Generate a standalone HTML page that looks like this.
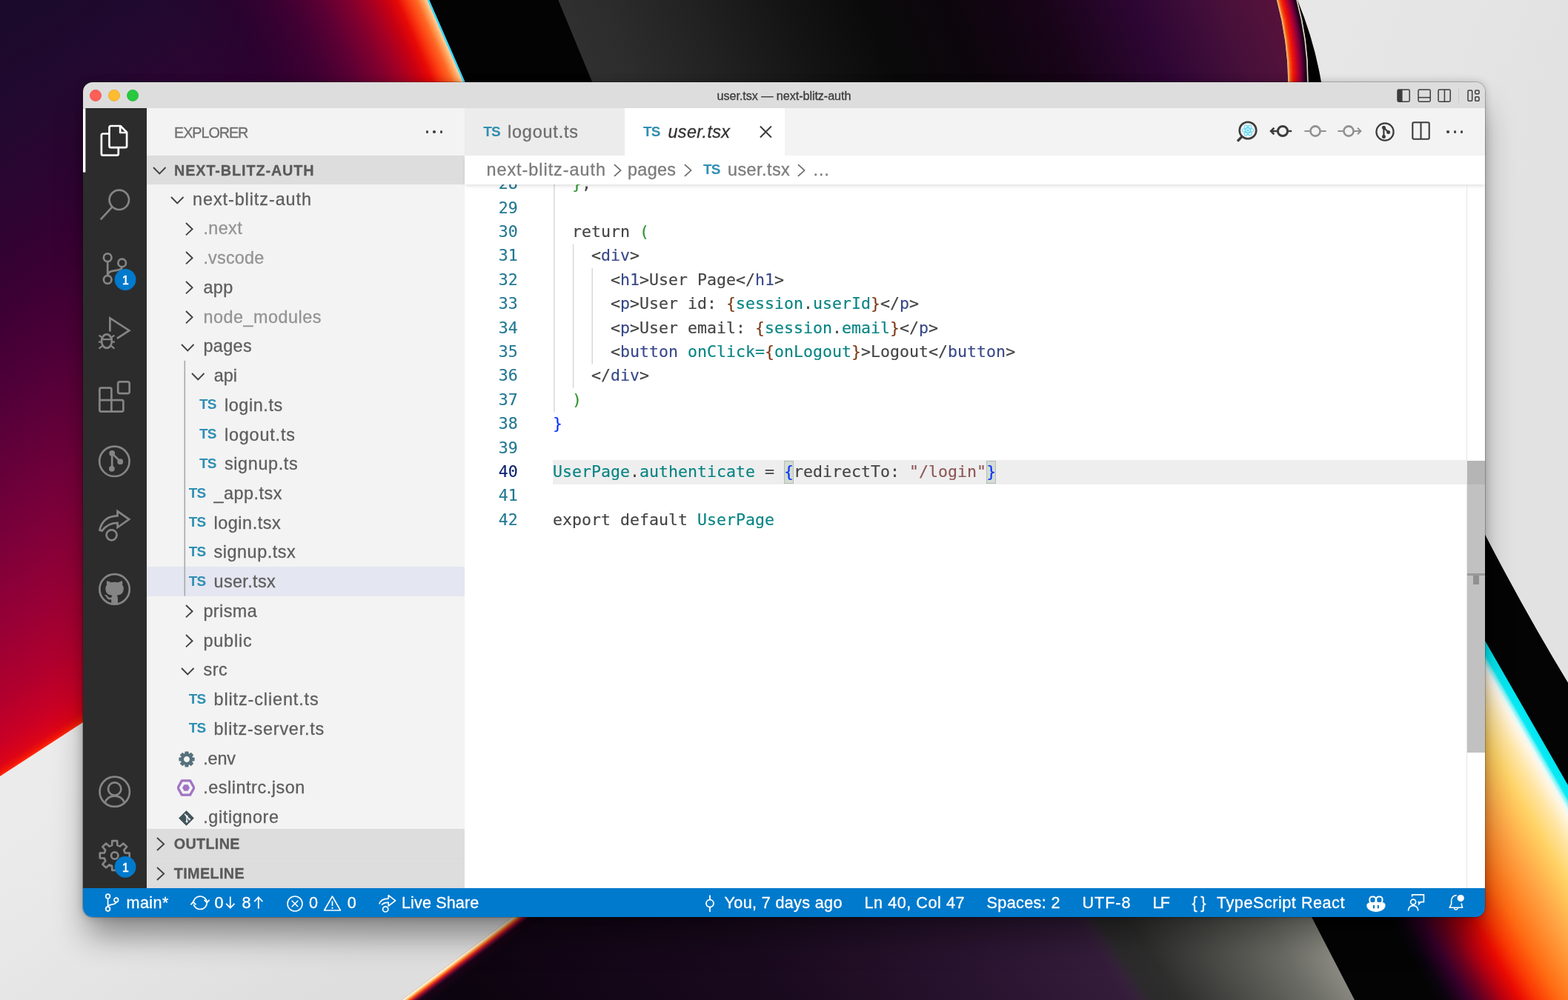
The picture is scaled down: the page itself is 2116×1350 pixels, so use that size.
<!DOCTYPE html>
<html lang="en"><head><meta charset="utf-8"><title>user.tsx — next-blitz-auth</title>
<style>
html,body{margin:0;padding:0;}
body{width:2116px;height:1350px;overflow:hidden;position:relative;background:#0a0a0a;font-family:"Liberation Sans",sans-serif;}
.t{position:absolute;white-space:pre;line-height:1;-webkit-text-stroke:0.3px currentColor;}
.r{position:absolute;display:block;}
.m{font-family:"DejaVu Sans Mono","Liberation Mono",monospace;-webkit-text-stroke:0.15px currentColor;}
#wall{position:absolute;left:0;top:0;}
#shadow{position:absolute;left:112px;top:111px;width:1892px;height:1127px;border-radius:13px;box-shadow:0 0 0 1px rgba(0,0,0,0.2),0 0 12px rgba(0,0,0,0.2),0 30px 44px -6px rgba(0,0,0,0.42);}
#win{position:absolute;left:0;top:0;width:2116px;height:1350px;clip-path:inset(111px 112px 112px 112px round 13px);will-change:transform;}
</style></head><body>
<svg id="wall" width="2116" height="1350" viewBox="0 0 2116 1350"><defs><linearGradient id="gA" gradientUnits="userSpaceOnUse" x1="0.0" y1="1048.0" x2="-490.5" y2="293.8"><stop offset="0.0000" stop-color="#ff2a10"/><stop offset="0.0044" stop-color="#f01408"/><stop offset="0.0133" stop-color="#dc0418"/><stop offset="0.0444" stop-color="#c80026"/><stop offset="0.1000" stop-color="#b0002e"/><stop offset="0.1889" stop-color="#960036"/><stop offset="0.2889" stop-color="#7c003a"/><stop offset="0.3889" stop-color="#64003a"/><stop offset="0.4889" stop-color="#4e0038"/><stop offset="0.5889" stop-color="#3c0034"/><stop offset="0.6889" stop-color="#2e0432"/><stop offset="0.8000" stop-color="#240830"/><stop offset="0.9111" stop-color="#1d0a2d"/><stop offset="1.0000" stop-color="#1a0b2b"/></linearGradient><linearGradient id="gB" gradientUnits="userSpaceOnUse" x1="579.6" y1="0.0" x2="277.1" y2="131.9"><stop offset="0.0000" stop-color="#38d8ff"/><stop offset="0.0067" stop-color="#38d8ff"/><stop offset="0.0097" stop-color="#ffd2a0"/><stop offset="0.0242" stop-color="#ffa860"/><stop offset="0.0485" stop-color="#ff6a26"/><stop offset="0.0848" stop-color="#fb3a10"/><stop offset="0.1212" stop-color="#e80a06"/><stop offset="0.1667" stop-color="#c80012"/><stop offset="0.2273" stop-color="#a40024"/><stop offset="0.3030" stop-color="#80002e"/><stop offset="0.4091" stop-color="#5c0034"/><stop offset="0.5455" stop-color="#400032" stop-opacity="0.9"/><stop offset="0.7273" stop-color="#2c002e" stop-opacity="0.6"/><stop offset="1.0000" stop-color="#20042a" stop-opacity="0"/></linearGradient><linearGradient id="gC" gradientUnits="userSpaceOnUse" x1="0.0" y1="1000.0" x2="286.0" y2="1431.6"><stop offset="0.0000" stop-color="#ececec"/><stop offset="0.3846" stop-color="#e9e9e9"/><stop offset="1.0000" stop-color="#dedede"/></linearGradient><linearGradient id="gD" gradientUnits="userSpaceOnUse" x1="542.0" y1="1350.0" x2="560.0" y2="1374.0"><stop offset="0.0000" stop-color="#fff8ee"/><stop offset="0.0800" stop-color="#ffe8b8"/><stop offset="0.1467" stop-color="#ffa040"/><stop offset="0.2200" stop-color="#f4461a"/><stop offset="0.3000" stop-color="#b01428"/><stop offset="0.3833" stop-color="#58082e"/><stop offset="0.4833" stop-color="#1a0416"/><stop offset="1.0000" stop-color="#0c040e"/></linearGradient><linearGradient id="gE" gradientUnits="userSpaceOnUse" x1="600.0" y1="1290.0" x2="1471.5" y2="712.5"><stop offset="0.0000" stop-color="#0c040e"/><stop offset="0.1143" stop-color="#120616"/><stop offset="0.3333" stop-color="#1a0a1e"/><stop offset="0.5714" stop-color="#2a1430"/><stop offset="0.7619" stop-color="#38203e"/><stop offset="0.8571" stop-color="#3e2542"/><stop offset="1.0000" stop-color="#3e2542"/></linearGradient><linearGradient id="gF" gradientUnits="userSpaceOnUse" x1="1448.0" y1="1238.0" x2="1697.0" y2="1073.0"><stop offset="0.0000" stop-color="#3a2440" stop-opacity="0"/><stop offset="0.0833" stop-color="#2c2a2c" stop-opacity="1"/><stop offset="0.2000" stop-color="#2e2e2d"/><stop offset="0.4667" stop-color="#4e4e4a"/><stop offset="0.7000" stop-color="#6c6c66"/><stop offset="0.8833" stop-color="#8c8c84"/><stop offset="1.0000" stop-color="#9a9a92"/></linearGradient><linearGradient id="gG" gradientUnits="userSpaceOnUse" x1="2004.0" y1="865.0" x2="1743.9" y2="1014.4"><stop offset="0.0000" stop-color="#00e6f2"/><stop offset="0.0300" stop-color="#08eaf4"/><stop offset="0.0400" stop-color="#7af2f6"/><stop offset="0.0567" stop-color="#e8fbf8"/><stop offset="0.0733" stop-color="#fff6e4"/><stop offset="0.1333" stop-color="#ffe6a6"/><stop offset="0.2167" stop-color="#ffd468"/><stop offset="0.2833" stop-color="#ffbe54"/><stop offset="0.3500" stop-color="#ffa646"/><stop offset="0.4333" stop-color="#ff8a2c"/><stop offset="0.5167" stop-color="#ff6a12"/><stop offset="0.6000" stop-color="#fb3a04"/><stop offset="0.6667" stop-color="#ea0a02"/><stop offset="0.7333" stop-color="#b80010"/><stop offset="0.8000" stop-color="#72001e"/><stop offset="0.8733" stop-color="#36002a"/><stop offset="0.9500" stop-color="#0c0410"/><stop offset="1.0000" stop-color="#040404"/></linearGradient><linearGradient id="gH" gradientUnits="userSpaceOnUse" x1="753.0" y1="0.0" x2="1677.0" y2="-383.0"><stop offset="0.0000" stop-color="#303030"/><stop offset="0.0600" stop-color="#2c2c2c"/><stop offset="0.1600" stop-color="#222222"/><stop offset="0.2800" stop-color="#141414"/><stop offset="0.3800" stop-color="#0a0a0a"/><stop offset="0.4800" stop-color="#0c060c"/><stop offset="0.6000" stop-color="#180418"/><stop offset="0.7200" stop-color="#2e0634"/><stop offset="0.8200" stop-color="#46103a"/><stop offset="0.9000" stop-color="#58123a"/><stop offset="0.9600" stop-color="#62143a"/><stop offset="1.0000" stop-color="#66163a"/></linearGradient><linearGradient id="gI" gradientUnits="userSpaceOnUse" x1="1722.0" y1="0.0" x2="1751.7" y2="-4.2"><stop offset="0.0000" stop-color="#ffe9b0"/><stop offset="0.0667" stop-color="#ffb050"/><stop offset="0.1667" stop-color="#ff4a0c"/><stop offset="0.3333" stop-color="#f01408"/><stop offset="0.5000" stop-color="#c40430"/><stop offset="0.6667" stop-color="#7a0040"/><stop offset="0.8000" stop-color="#3a0030"/><stop offset="0.9000" stop-color="#140010"/><stop offset="0.9333" stop-color="#f0e8d8"/><stop offset="0.9667" stop-color="#050505"/><stop offset="1.0000" stop-color="#020202"/></linearGradient><linearGradient id="gJ" gradientUnits="userSpaceOnUse" x1="1790.0" y1="0.0" x2="2120.0" y2="99.0"><stop offset="0.0000" stop-color="#e7e7e7"/><stop offset="1.0000" stop-color="#e2e2e2"/></linearGradient></defs><rect width="2116" height="1350" fill="#050505"/><polygon points="0,0 579.6,0 1168,1350 0,1350" fill="url(#gA)"/><polygon points="0,0 579.6,0 1168,1350 0,1350" fill="url(#gB)"/><polygon points="579.6,0 2116,0 2116,400 754,400" fill="#030303"/><polygon points="753.3,0 1760,0 1800,400 919,400" fill="url(#gH)"/><path d="M1750.3,-1 Q1765.7,54.5 1765.3,112 L1783.2,112 Q1773.5,54.5 1750.6,-1 Z" fill="#020202"/><path d="M1722.60,-1.0 Q1737.80,54.5 1738.30,112.0 L1739.11,112.0 Q1738.63,54.5 1723.43,-1.0 Z" fill="#ffda97"/><path d="M1723.09,-1.0 Q1738.30,54.5 1738.78,112.0 L1739.59,112.0 Q1739.13,54.5 1723.92,-1.0 Z" fill="#ffc879"/><path d="M1723.59,-1.0 Q1738.80,54.5 1739.26,112.0 L1740.07,112.0 Q1739.63,54.5 1724.42,-1.0 Z" fill="#ffb65b"/><path d="M1724.08,-1.0 Q1739.29,54.5 1739.75,112.0 L1740.55,112.0 Q1740.13,54.5 1724.91,-1.0 Z" fill="#ffa448"/><path d="M1724.58,-1.0 Q1739.79,54.5 1740.23,112.0 L1741.03,112.0 Q1740.63,54.5 1725.41,-1.0 Z" fill="#ff913a"/><path d="M1725.07,-1.0 Q1740.29,54.5 1740.71,112.0 L1741.52,112.0 Q1741.12,54.5 1725.90,-1.0 Z" fill="#ff7d2d"/><path d="M1725.57,-1.0 Q1740.79,54.5 1741.19,112.0 L1742.00,112.0 Q1741.62,54.5 1726.39,-1.0 Z" fill="#ff6a20"/><path d="M1726.06,-1.0 Q1741.29,54.5 1741.67,112.0 L1742.48,112.0 Q1742.12,54.5 1726.89,-1.0 Z" fill="#ff5712"/><path d="M1726.56,-1.0 Q1741.79,54.5 1742.16,112.0 L1742.96,112.0 Q1742.62,54.5 1727.38,-1.0 Z" fill="#ff4e0f"/><path d="M1727.05,-1.0 Q1742.28,54.5 1742.64,112.0 L1743.45,112.0 Q1743.12,54.5 1727.88,-1.0 Z" fill="#fe460e"/><path d="M1727.55,-1.0 Q1742.78,54.5 1743.12,112.0 L1743.93,112.0 Q1743.62,54.5 1728.37,-1.0 Z" fill="#fe3f0c"/><path d="M1728.04,-1.0 Q1743.28,54.5 1743.60,112.0 L1744.41,112.0 Q1744.11,54.5 1728.87,-1.0 Z" fill="#fe370b"/><path d="M1728.54,-1.0 Q1743.78,54.5 1744.09,112.0 L1744.89,112.0 Q1744.61,54.5 1729.36,-1.0 Z" fill="#fd300a"/><path d="M1729.03,-1.0 Q1744.28,54.5 1744.57,112.0 L1745.37,112.0 Q1745.11,54.5 1729.86,-1.0 Z" fill="#fd2809"/><path d="M1729.52,-1.0 Q1744.78,54.5 1745.05,112.0 L1745.86,112.0 Q1745.61,54.5 1730.35,-1.0 Z" fill="#fc2107"/><path d="M1730.02,-1.0 Q1745.27,54.5 1745.53,112.0 L1746.34,112.0 Q1746.11,54.5 1730.85,-1.0 Z" fill="#fc1906"/><path d="M1730.51,-1.0 Q1745.77,54.5 1746.01,112.0 L1746.82,112.0 Q1746.60,54.5 1731.34,-1.0 Z" fill="#f81609"/><path d="M1731.01,-1.0 Q1746.27,54.5 1746.50,112.0 L1747.30,112.0 Q1747.10,54.5 1731.84,-1.0 Z" fill="#f3140c"/><path d="M1731.50,-1.0 Q1746.77,54.5 1746.98,112.0 L1747.78,112.0 Q1747.60,54.5 1732.33,-1.0 Z" fill="#ee1210"/><path d="M1732.00,-1.0 Q1747.27,54.5 1747.46,112.0 L1748.27,112.0 Q1748.10,54.5 1732.83,-1.0 Z" fill="#ea1013"/><path d="M1732.49,-1.0 Q1747.76,54.5 1747.94,112.0 L1748.75,112.0 Q1748.60,54.5 1733.32,-1.0 Z" fill="#e50e16"/><path d="M1732.99,-1.0 Q1748.26,54.5 1748.42,112.0 L1749.23,112.0 Q1749.10,54.5 1733.81,-1.0 Z" fill="#e00c1a"/><path d="M1733.48,-1.0 Q1748.76,54.5 1748.91,112.0 L1749.71,112.0 Q1749.59,54.5 1734.31,-1.0 Z" fill="#db0a1d"/><path d="M1733.98,-1.0 Q1749.26,54.5 1749.39,112.0 L1750.20,112.0 Q1750.09,54.5 1734.80,-1.0 Z" fill="#d60821"/><path d="M1734.47,-1.0 Q1749.76,54.5 1749.87,112.0 L1750.68,112.0 Q1750.59,54.5 1735.30,-1.0 Z" fill="#d20624"/><path d="M1734.97,-1.0 Q1750.26,54.5 1750.35,112.0 L1751.16,112.0 Q1751.09,54.5 1735.79,-1.0 Z" fill="#cd0427"/><path d="M1735.46,-1.0 Q1750.75,54.5 1750.84,112.0 L1751.64,112.0 Q1751.59,54.5 1736.29,-1.0 Z" fill="#c6042a"/><path d="M1735.96,-1.0 Q1751.25,54.5 1751.32,112.0 L1752.12,112.0 Q1752.08,54.5 1736.78,-1.0 Z" fill="#c0032c"/><path d="M1736.45,-1.0 Q1751.75,54.5 1751.80,112.0 L1752.61,112.0 Q1752.58,54.5 1737.28,-1.0 Z" fill="#b9032e"/><path d="M1736.94,-1.0 Q1752.25,54.5 1752.28,112.0 L1753.09,112.0 Q1753.08,54.5 1737.77,-1.0 Z" fill="#b30230"/><path d="M1737.44,-1.0 Q1752.75,54.5 1752.76,112.0 L1753.57,112.0 Q1753.58,54.5 1738.27,-1.0 Z" fill="#ac0232"/><path d="M1737.93,-1.0 Q1753.24,54.5 1753.25,112.0 L1754.05,112.0 Q1754.08,54.5 1738.76,-1.0 Z" fill="#a50234"/><path d="M1738.43,-1.0 Q1753.74,54.5 1753.73,112.0 L1754.53,112.0 Q1754.58,54.5 1739.26,-1.0 Z" fill="#9f0136"/><path d="M1738.92,-1.0 Q1754.24,54.5 1754.21,112.0 L1755.02,112.0 Q1755.07,54.5 1739.75,-1.0 Z" fill="#980138"/><path d="M1739.42,-1.0 Q1754.74,54.5 1754.69,112.0 L1755.50,112.0 Q1755.57,54.5 1740.24,-1.0 Z" fill="#92003a"/><path d="M1739.91,-1.0 Q1755.24,54.5 1755.17,112.0 L1755.98,112.0 Q1756.07,54.5 1740.74,-1.0 Z" fill="#8b003c"/><path d="M1740.41,-1.0 Q1755.74,54.5 1755.66,112.0 L1756.46,112.0 Q1756.57,54.5 1741.23,-1.0 Z" fill="#83003b"/><path d="M1740.90,-1.0 Q1756.23,54.5 1756.14,112.0 L1756.95,112.0 Q1757.07,54.5 1741.73,-1.0 Z" fill="#7b003a"/><path d="M1741.40,-1.0 Q1756.73,54.5 1756.62,112.0 L1757.43,112.0 Q1757.57,54.5 1742.22,-1.0 Z" fill="#730039"/><path d="M1741.89,-1.0 Q1757.23,54.5 1757.10,112.0 L1757.91,112.0 Q1758.06,54.5 1742.72,-1.0 Z" fill="#6b0038"/><path d="M1742.39,-1.0 Q1757.73,54.5 1757.59,112.0 L1758.39,112.0 Q1758.56,54.5 1743.21,-1.0 Z" fill="#630037"/><path d="M1742.88,-1.0 Q1758.23,54.5 1758.07,112.0 L1758.87,112.0 Q1759.06,54.5 1743.71,-1.0 Z" fill="#5b0036"/><path d="M1743.38,-1.0 Q1758.72,54.5 1758.55,112.0 L1759.36,112.0 Q1759.56,54.5 1744.20,-1.0 Z" fill="#530035"/><path d="M1743.87,-1.0 Q1759.22,54.5 1759.03,112.0 L1759.84,112.0 Q1760.06,54.5 1744.70,-1.0 Z" fill="#4b0034"/><path d="M1744.36,-1.0 Q1759.72,54.5 1759.51,112.0 L1760.32,112.0 Q1760.55,54.5 1745.19,-1.0 Z" fill="#440030"/><path d="M1744.86,-1.0 Q1760.22,54.5 1760.00,112.0 L1760.80,112.0 Q1761.05,54.5 1745.69,-1.0 Z" fill="#3c002a"/><path d="M1745.35,-1.0 Q1760.72,54.5 1760.48,112.0 L1761.28,112.0 Q1761.55,54.5 1746.18,-1.0 Z" fill="#340025"/><path d="M1745.85,-1.0 Q1761.22,54.5 1760.96,112.0 L1761.77,112.0 Q1762.05,54.5 1746.68,-1.0 Z" fill="#2d0020"/><path d="M1746.34,-1.0 Q1761.71,54.5 1761.44,112.0 L1762.25,112.0 Q1762.55,54.5 1747.17,-1.0 Z" fill="#25001a"/><path d="M1746.84,-1.0 Q1762.21,54.5 1761.92,112.0 L1762.73,112.0 Q1763.05,54.5 1747.66,-1.0 Z" fill="#1d0015"/><path d="M1747.33,-1.0 Q1762.71,54.5 1762.41,112.0 L1763.21,112.0 Q1763.54,54.5 1748.16,-1.0 Z" fill="#190011"/><path d="M1747.83,-1.0 Q1763.21,54.5 1762.89,112.0 L1763.70,112.0 Q1764.04,54.5 1748.65,-1.0 Z" fill="#15000d"/><path d="M1748.32,-1.0 Q1763.71,54.5 1763.37,112.0 L1764.18,112.0 Q1764.54,54.5 1749.15,-1.0 Z" fill="#110009"/><path d="M1748.82,-1.0 Q1764.21,54.5 1763.85,112.0 L1764.66,112.0 Q1765.04,54.5 1749.64,-1.0 Z" fill="#897d78"/><path d="M1749.31,-1.0 Q1764.70,54.5 1764.34,112.0 L1765.14,112.0 Q1765.54,54.5 1750.14,-1.0 Z" fill="#f4ecdc"/><path d="M1749.81,-1.0 Q1765.20,54.5 1764.82,112.0 L1765.62,112.0 Q1766.03,54.5 1750.63,-1.0 Z" fill="#f4ecdc"/><path d="M1750.6,-1 Q1773.5,54.5 1783.2,112 Q1850,400 2004,722 Q2060,830 2116,922 L2116,-1 Z" fill="url(#gJ)"/><path d="M2004,722 Q2060,830 2116,922 L2116,1350 L1500,1350 L1500,722 Z" fill="#040404"/><polygon points="1700,336 2116,1060 2116,1350 1700,1350" fill="url(#gG)"/><polygon points="692,1238 1768.5,1238 1826.5,1350 542,1350" fill="url(#gE)"/><polygon points="1420,1238 1770,1238 1828,1350 1495,1350" fill="url(#gF)"/><polygon points="1770,1238 1700,1100 1700,1238" fill="#040404"/><polygon points="0,1048 1000,398 1300,784 542,1350 0,1350" fill="url(#gC)"/><polygon points="542,1350 1300,784 1340,784 582,1350" fill="url(#gD)"/></svg>
<div id="shadow"></div>
<div id="win">
<div class="r " style="left:112.00px;top:111.00px;width:1892.00px;height:35.30px;background:#dddddd;"></div>
<div class="r " style="left:112.00px;top:146.20px;width:86.00px;height:1053.00px;background:#2c2c2c;"></div>
<div class="r " style="left:198.00px;top:146.20px;width:429.00px;height:1053.00px;background:#f3f3f3;"></div>
<div class="r " style="left:627.00px;top:146.20px;width:1377.00px;height:63.50px;background:#f3f3f3;"></div>
<div class="r " style="left:627.00px;top:209.70px;width:1377.00px;height:989.00px;background:#ffffff;"></div>
<div class="r " style="left:112.00px;top:1198.80px;width:1892.00px;height:40.00px;background:#007acc;"></div>
<svg class="r" style="left:112.00px;top:112.00px;" width="90.00" height="34.00" viewBox="112 112 90 34" fill="none"><circle cx="129.0" cy="128.9" r="7.6" fill="#fe5f57" stroke="#e2463f" stroke-width="0.6"/><circle cx="154.0" cy="128.9" r="7.6" fill="#febc2e" stroke="#dfa023" stroke-width="0.6"/><circle cx="179.1" cy="128.9" r="7.6" fill="#28c840" stroke="#1dad2b" stroke-width="0.6"/></svg>
<span class="t " style="left:967.60px;top:121.44px;font-size:16.25px;color:#3b3b3b;letter-spacing:-0.097px;">user.tsx — next-blitz-auth</span>
<svg class="r" style="left:1885.20px;top:120.20px;" width="18.20" height="18.20" viewBox="0 0 18 18" fill="none"><rect x="1" y="1" width="16" height="16" rx="1.6" stroke="#3c3c3c" stroke-width="1.5"/><path d="M1 2.2 Q1 1 2.2 1 H7.5 V17 H2.2 Q1 17 1 15.8 Z" fill="#3c3c3c"/></svg>
<svg class="r" style="left:1912.80px;top:120.20px;" width="18.20" height="18.20" viewBox="0 0 18 18" fill="none"><rect x="1" y="1" width="16" height="16" rx="1.6" stroke="#3c3c3c" stroke-width="1.5"/><path d="M1 11.5 H17" stroke="#3c3c3c" stroke-width="1.5"/></svg>
<svg class="r" style="left:1940.20px;top:120.20px;" width="18.20" height="18.20" viewBox="0 0 18 18" fill="none"><rect x="1" y="1" width="16" height="16" rx="1.6" stroke="#3c3c3c" stroke-width="1.5"/><path d="M9.3 1 V17" stroke="#3c3c3c" stroke-width="1.5"/></svg>
<div class="r " style="left:1968.20px;top:119.00px;width:1.20px;height:19.50px;background:#cacaca;"></div>
<svg class="r" style="left:1980.30px;top:121.20px;" width="17.20" height="16.20" viewBox="0 0 17 16" fill="none"><rect x="1" y="1" width="5.6" height="14" rx="1.2" stroke="#3c3c3c" stroke-width="1.5"/><rect x="10.6" y="1" width="5.2" height="4.6" rx="1.2" stroke="#3c3c3c" stroke-width="1.5"/><rect x="10.6" y="9.6" width="5.2" height="5.4" rx="1.2" stroke="#3c3c3c" stroke-width="1.5"/></svg>
<span class="t " style="left:235.00px;top:169.74px;font-size:19.80px;color:#6f6f6f;letter-spacing:-1.048px;">EXPLORER</span>
<div class="r " style="left:574.60px;top:176.30px;width:3.40px;height:3.40px;background:#424242;border-radius:50%;"></div>
<div class="r " style="left:584.30px;top:176.30px;width:3.40px;height:3.40px;background:#424242;border-radius:50%;"></div>
<div class="r " style="left:594.00px;top:176.30px;width:3.40px;height:3.40px;background:#424242;border-radius:50%;"></div>
<div class="r " style="left:198.00px;top:209.70px;width:429.00px;height:39.00px;background:#dddddd;"></div>
<svg class="r" style="left:205.45px;top:223.95px;" width="20.50" height="12.50" viewBox="-2 -2 20.5 12.5" fill="none"><path d="M0 0 L8.25 8.5 L16.5 0" stroke="#424242" stroke-width="1.9" stroke-linejoin="miter"/></svg>
<span class="t " style="left:235.00px;top:220.74px;font-size:19.80px;color:#5a5a5a;font-weight:700;letter-spacing:0.912px;">NEXT-BLITZ-AUTH</span>
<div class="r " style="left:198.00px;top:764.99px;width:429.00px;height:39.73px;background:#e4e6f1;"></div>
<svg class="r" style="left:247px;top:485px" width="5" height="321" viewBox="247 485 5 321"><rect x="248.50" y="486.88" width="1.60" height="317.84" fill="#a9a9a9"/></svg>
<span class="t " style="left:260.00px;top:257.69px;font-size:23.40px;color:#5e5e5e;letter-spacing:0.931px;">next-blitz-auth</span>
<svg class="r" style="left:228.65px;top:263.95px;" width="20.50" height="12.50" viewBox="-2 -2 20.5 12.5" fill="none"><path d="M0 0 L8.25 8.5 L16.5 0" stroke="#424242" stroke-width="1.9" stroke-linejoin="miter"/></svg>
<span class="t " style="left:274.40px;top:297.42px;font-size:23.40px;color:#939393;letter-spacing:0.405px;">.next</span>
<svg class="r" style="left:248.50px;top:298.53px;" width="12.60" height="20.40" viewBox="-2 -2 12.6 20.4" fill="none"><path d="M0 0 L8.6 8.2 L0 16.4" stroke="#424242" stroke-width="1.9" stroke-linejoin="miter"/></svg>
<span class="t " style="left:274.40px;top:337.15px;font-size:23.40px;color:#939393;letter-spacing:0.201px;">.vscode</span>
<svg class="r" style="left:248.50px;top:338.26px;" width="12.60" height="20.40" viewBox="-2 -2 12.6 20.4" fill="none"><path d="M0 0 L8.6 8.2 L0 16.4" stroke="#424242" stroke-width="1.9" stroke-linejoin="miter"/></svg>
<span class="t " style="left:274.40px;top:376.88px;font-size:23.40px;color:#5e5e5e;letter-spacing:0.404px;">app</span>
<svg class="r" style="left:248.50px;top:377.99px;" width="12.60" height="20.40" viewBox="-2 -2 12.6 20.4" fill="none"><path d="M0 0 L8.6 8.2 L0 16.4" stroke="#424242" stroke-width="1.9" stroke-linejoin="miter"/></svg>
<span class="t " style="left:274.40px;top:416.61px;font-size:23.40px;color:#939393;letter-spacing:0.507px;">node_modules</span>
<svg class="r" style="left:248.50px;top:417.72px;" width="12.60" height="20.40" viewBox="-2 -2 12.6 20.4" fill="none"><path d="M0 0 L8.6 8.2 L0 16.4" stroke="#424242" stroke-width="1.9" stroke-linejoin="miter"/></svg>
<span class="t " style="left:274.40px;top:456.34px;font-size:23.40px;color:#5e5e5e;letter-spacing:0.398px;">pages</span>
<svg class="r" style="left:243.05px;top:462.60px;" width="20.50" height="12.50" viewBox="-2 -2 20.5 12.5" fill="none"><path d="M0 0 L8.25 8.5 L16.5 0" stroke="#424242" stroke-width="1.9" stroke-linejoin="miter"/></svg>
<span class="t " style="left:288.80px;top:496.07px;font-size:23.40px;color:#5e5e5e;letter-spacing:-0.013px;">api</span>
<svg class="r" style="left:257.45px;top:502.33px;" width="20.50" height="12.50" viewBox="-2 -2 20.5 12.5" fill="none"><path d="M0 0 L8.25 8.5 L16.5 0" stroke="#424242" stroke-width="1.9" stroke-linejoin="miter"/></svg>
<span class="t " style="left:302.90px;top:535.80px;font-size:23.40px;color:#5e5e5e;letter-spacing:0.601px;">login.ts</span>
<span class="t " style="left:269.10px;top:536.33px;font-size:19.00px;color:#2f8fb3;font-weight:700;letter-spacing:-0.9px;-webkit-text-stroke:0;">TS</span>
<span class="t " style="left:302.90px;top:575.53px;font-size:23.40px;color:#5e5e5e;letter-spacing:0.830px;">logout.ts</span>
<span class="t " style="left:269.10px;top:576.06px;font-size:19.00px;color:#2f8fb3;font-weight:700;letter-spacing:-0.9px;-webkit-text-stroke:0;">TS</span>
<span class="t " style="left:302.90px;top:615.26px;font-size:23.40px;color:#5e5e5e;letter-spacing:0.649px;">signup.ts</span>
<span class="t " style="left:269.10px;top:615.79px;font-size:19.00px;color:#2f8fb3;font-weight:700;letter-spacing:-0.9px;-webkit-text-stroke:0;">TS</span>
<span class="t " style="left:288.50px;top:654.99px;font-size:23.40px;color:#5e5e5e;letter-spacing:0.506px;">_app.tsx</span>
<span class="t " style="left:254.70px;top:655.52px;font-size:19.00px;color:#2f8fb3;font-weight:700;letter-spacing:-0.9px;-webkit-text-stroke:0;">TS</span>
<span class="t " style="left:288.50px;top:694.72px;font-size:23.40px;color:#5e5e5e;letter-spacing:0.551px;">login.tsx</span>
<span class="t " style="left:254.70px;top:695.25px;font-size:19.00px;color:#2f8fb3;font-weight:700;letter-spacing:-0.9px;-webkit-text-stroke:0;">TS</span>
<span class="t " style="left:288.50px;top:734.45px;font-size:23.40px;color:#5e5e5e;letter-spacing:0.544px;">signup.tsx</span>
<span class="t " style="left:254.70px;top:734.98px;font-size:19.00px;color:#2f8fb3;font-weight:700;letter-spacing:-0.9px;-webkit-text-stroke:0;">TS</span>
<span class="t " style="left:288.50px;top:774.18px;font-size:23.40px;color:#5e5e5e;letter-spacing:0.374px;">user.tsx</span>
<span class="t " style="left:254.70px;top:774.71px;font-size:19.00px;color:#2f8fb3;font-weight:700;letter-spacing:-0.9px;-webkit-text-stroke:0;">TS</span>
<span class="t " style="left:274.40px;top:813.91px;font-size:23.40px;color:#5e5e5e;letter-spacing:0.428px;">prisma</span>
<svg class="r" style="left:248.50px;top:815.02px;" width="12.60" height="20.40" viewBox="-2 -2 12.6 20.4" fill="none"><path d="M0 0 L8.6 8.2 L0 16.4" stroke="#424242" stroke-width="1.9" stroke-linejoin="miter"/></svg>
<span class="t " style="left:274.40px;top:853.64px;font-size:23.40px;color:#5e5e5e;letter-spacing:0.842px;">public</span>
<svg class="r" style="left:248.50px;top:854.75px;" width="12.60" height="20.40" viewBox="-2 -2 12.6 20.4" fill="none"><path d="M0 0 L8.6 8.2 L0 16.4" stroke="#424242" stroke-width="1.9" stroke-linejoin="miter"/></svg>
<span class="t " style="left:274.40px;top:893.37px;font-size:23.40px;color:#5e5e5e;letter-spacing:0.579px;">src</span>
<svg class="r" style="left:243.05px;top:899.63px;" width="20.50" height="12.50" viewBox="-2 -2 20.5 12.5" fill="none"><path d="M0 0 L8.25 8.5 L16.5 0" stroke="#424242" stroke-width="1.9" stroke-linejoin="miter"/></svg>
<span class="t " style="left:288.50px;top:933.10px;font-size:23.40px;color:#5e5e5e;letter-spacing:0.894px;">blitz-client.ts</span>
<span class="t " style="left:254.70px;top:933.63px;font-size:19.00px;color:#2f8fb3;font-weight:700;letter-spacing:-0.9px;-webkit-text-stroke:0;">TS</span>
<span class="t " style="left:288.50px;top:972.83px;font-size:23.40px;color:#5e5e5e;letter-spacing:0.780px;">blitz-server.ts</span>
<span class="t " style="left:254.70px;top:973.36px;font-size:19.00px;color:#2f8fb3;font-weight:700;letter-spacing:-0.9px;-webkit-text-stroke:0;">TS</span>
<span class="t " style="left:274.25px;top:1012.56px;font-size:23.40px;color:#5e5e5e;letter-spacing:-0.160px;">.env</span>
<svg class="r" style="left:240.65px;top:1013.57px;" width="22.00" height="22.00" viewBox="-11 -11 22 22" fill="none"><circle r="6.1" stroke="#56717c" stroke-width="4.2"/><rect x="-2.6" y="-10.6" width="5.2" height="5" rx="0.8" transform="rotate(0)" fill="#56717c"/><rect x="-2.6" y="-10.6" width="5.2" height="5" rx="0.8" transform="rotate(45)" fill="#56717c"/><rect x="-2.6" y="-10.6" width="5.2" height="5" rx="0.8" transform="rotate(90)" fill="#56717c"/><rect x="-2.6" y="-10.6" width="5.2" height="5" rx="0.8" transform="rotate(135)" fill="#56717c"/><rect x="-2.6" y="-10.6" width="5.2" height="5" rx="0.8" transform="rotate(180)" fill="#56717c"/><rect x="-2.6" y="-10.6" width="5.2" height="5" rx="0.8" transform="rotate(225)" fill="#56717c"/><rect x="-2.6" y="-10.6" width="5.2" height="5" rx="0.8" transform="rotate(270)" fill="#56717c"/><rect x="-2.6" y="-10.6" width="5.2" height="5" rx="0.8" transform="rotate(315)" fill="#56717c"/></svg>
<span class="t " style="left:274.25px;top:1052.29px;font-size:23.40px;color:#5e5e5e;letter-spacing:0.535px;">.eslintrc.json</span>
<svg class="r" style="left:239.25px;top:1052.30px;" width="24.00" height="23.00" viewBox="-12 -11.5 24 23" fill="none"><path d="M-11 0 L-5.6 -9.6 L5.6 -9.6 L11 0 L5.6 9.6 L-5.6 9.6 Z" stroke="#a074c4" stroke-width="3.3" stroke-linejoin="round"/><path d="M-5 0 L-2.5 -4.35 L2.5 -4.35 L5 0 L2.5 4.35 L-2.5 4.35 Z" fill="#a074c4"/></svg>
<span class="t " style="left:274.25px;top:1092.02px;font-size:23.40px;color:#5e5e5e;letter-spacing:0.610px;">.gitignore</span>
<svg class="r" style="left:240.75px;top:1093.53px;" width="21.00" height="21.00" viewBox="-10.5 -10.5 21 21" fill="none"><path d="M0 -9.8 L9.8 0 L0 9.8 L-9.8 0 Z" fill="#41535b" stroke="#41535b" stroke-width="1" stroke-linejoin="round"/><path d="M-2.4 -5.6 L0.8 -2.4 M0.6 -2.6 V4.6 M0.8 -2 L4 1.2" stroke="#f3f3f3" stroke-width="1.5"/><circle cx="0.6" cy="4.6" r="1.5" fill="#f3f3f3"/><circle cx="4" cy="1.4" r="1.5" fill="#f3f3f3"/><circle cx="0.7" cy="-2.4" r="1.5" fill="#f3f3f3"/></svg>
<div class="r " style="left:198.00px;top:1119.00px;width:429.00px;height:80.00px;background:#dddddd;"></div>
<div class="r " style="left:198.00px;top:1158.80px;width:429.00px;height:1.20px;background:#dadada;"></div>
<svg class="r" style="left:209.80px;top:1129.00px;" width="13.20" height="21.00" viewBox="-2 -2 13.2 21" fill="none"><path d="M0 0 L9.2 8.5 L0 17" stroke="#424242" stroke-width="1.9" stroke-linejoin="miter"/></svg>
<svg class="r" style="left:209.80px;top:1168.50px;" width="13.20" height="21.00" viewBox="-2 -2 13.2 21" fill="none"><path d="M0 0 L9.2 8.5 L0 17" stroke="#424242" stroke-width="1.9" stroke-linejoin="miter"/></svg>
<span class="t " style="left:234.75px;top:1130.49px;font-size:19.80px;color:#5a5a5a;font-weight:700;letter-spacing:0.309px;">OUTLINE</span>
<span class="t " style="left:234.75px;top:1169.99px;font-size:19.80px;color:#5a5a5a;font-weight:700;letter-spacing:0.372px;">TIMELINE</span>
<div class="r " style="left:627.00px;top:146.20px;width:215.50px;height:63.50px;background:#ececec;"></div>
<div class="r " style="left:842.50px;top:146.20px;width:216.20px;height:63.50px;background:#ffffff;"></div>
<span class="t " style="left:652.20px;top:167.72px;font-size:19.00px;color:#2f8fb3;font-weight:700;letter-spacing:-0.9px;-webkit-text-stroke:0;">TS</span>
<span class="t " style="left:685.00px;top:167.19px;font-size:23.40px;color:#6e6e6e;letter-spacing:0.818px;">logout.ts</span>
<span class="t " style="left:868.00px;top:167.72px;font-size:19.00px;color:#2f8fb3;font-weight:700;letter-spacing:-0.9px;-webkit-text-stroke:0;">TS</span>
<span class="t " style="left:901.50px;top:167.19px;font-size:23.40px;color:#333333;font-style:italic;letter-spacing:0.349px;">user.tsx</span>
<svg class="r" style="left:1022.50px;top:168.00px;" width="20.00" height="20.00" viewBox="0 0 20 20" fill="none"><path d="M2.9 2.5 L17.9 17.5 M17.9 2.5 L2.9 17.5" stroke="#3a3a3a" stroke-width="1.9"/></svg>
<svg class="r" style="left:1664.00px;top:160.00px;" width="36.00" height="36.00" viewBox="0 0 36 36" fill="none"><circle cx="20" cy="16" r="11.3" stroke="#3c3c3c" stroke-width="2.6"/><path d="M12 24.4 L6 30.6" stroke="#3c3c3c" stroke-width="3.4" stroke-linecap="butt"/><g stroke="#4fd8f5" stroke-width="1" fill="none"><ellipse cx="20" cy="16" rx="8" ry="3.1"/><ellipse cx="20" cy="16" rx="8" ry="3.1" transform="rotate(60 20 16)"/><ellipse cx="20" cy="16" rx="8" ry="3.1" transform="rotate(120 20 16)"/></g><circle cx="20" cy="16" r="1.5" fill="#4fd8f5"/></svg>
<svg class="r" style="left:1711.00px;top:165.00px;" width="40.00" height="24.00" viewBox="-20 -12 40 24" fill="none"><circle cx="0" cy="0" r="6.6" stroke="#3c3c3c" stroke-width="3.0"/><path d="M-7 0 H-15.5 M-11.6 -4.4 L-16 0 L-11.6 4.4" stroke="#3c3c3c" stroke-width="2.5"/><path d="M7.6 0 H12.2" stroke="#3c3c3c" stroke-width="2.4"/></svg>
<svg class="r" style="left:1755.40px;top:165.00px;" width="40.00" height="24.00" viewBox="-20 -12 40 24" fill="none"><circle cx="0" cy="0" r="6.6" stroke="#8f8f8f" stroke-width="2.6"/><path d="M-7.6 0 H-14.6" stroke="#8f8f8f" stroke-width="2.0"/><path d="M7.6 0 H14.6" stroke="#8f8f8f" stroke-width="2.0"/></svg>
<svg class="r" style="left:1799.50px;top:165.00px;" width="40.00" height="24.00" viewBox="-20 -12 40 24" fill="none"><circle cx="0" cy="0" r="6.6" stroke="#8f8f8f" stroke-width="2.6"/><path d="M-7.6 0 H-14.6" stroke="#8f8f8f" stroke-width="2.0"/><path d="M7 0 H16 M12 -4.4 L16.4 0 L12 4.4" stroke="#8f8f8f" stroke-width="2.0"/></svg>
<svg class="r" style="left:1855.40px;top:163.50px;" width="28.00" height="28.00" viewBox="-14 -14 28 28" fill="none"><circle r="11.6" stroke="#3c3c3c" stroke-width="2.2"/><path d="M-1.6 -5.6 V6.4 M-1.6 -5.6 L4.4 0.2" stroke="#3c3c3c" stroke-width="2.2"/><circle cx="-1.6" cy="-5.8" r="2.5" fill="#3c3c3c"/><circle cx="4.6" cy="0.4" r="2.5" fill="#3c3c3c"/><circle cx="-1.6" cy="6.4" r="2.5" fill="#3c3c3c"/></svg>
<svg class="r" style="left:1904.60px;top:164.40px;" width="25.00" height="25.00" viewBox="0 0 25 25" fill="none"><rect x="1.3" y="1.3" width="22.4" height="22.4" rx="1.6" stroke="#3c3c3c" stroke-width="2.1"/><path d="M12.5 1.3 V23.7" stroke="#3c3c3c" stroke-width="2.1"/></svg>
<div class="r " style="left:1952.10px;top:176.10px;width:3.60px;height:3.60px;background:#424242;border-radius:50%;"></div>
<div class="r " style="left:1961.50px;top:176.10px;width:3.60px;height:3.60px;background:#424242;border-radius:50%;"></div>
<div class="r " style="left:1970.90px;top:176.10px;width:3.60px;height:3.60px;background:#424242;border-radius:50%;"></div>
<div class="r " style="left:746.00px;top:621.30px;width:1234.00px;height:32.40px;background:#eeeeee;"></div>
<svg class="r" style="left:746px;top:248px" width="5" height="311" viewBox="746 248 5 311"><rect x="747.10" y="249.00" width="1.50" height="307.50" fill="#d8d8d8"/></svg>
<svg class="r" style="left:771px;top:328px" width="5" height="198" viewBox="771 328 5 198"><rect x="772.90" y="329.70" width="1.50" height="194.40" fill="#d8d8d8"/></svg>
<svg class="r" style="left:797px;top:361px" width="5" height="133" viewBox="797 361 5 133"><rect x="798.50" y="362.10" width="1.50" height="129.60" fill="#d8d8d8"/></svg>
<span class="t  m" style="left:672.70px;top:237.27px;font-size:21.60px;color:#237893;letter-spacing:-0.0012px;">28</span>
<span class="t  m" style="left:672.70px;top:269.67px;font-size:21.60px;color:#237893;letter-spacing:-0.0012px;">29</span>
<span class="t  m" style="left:672.70px;top:302.07px;font-size:21.60px;color:#237893;letter-spacing:-0.0012px;">30</span>
<span class="t  m" style="left:672.70px;top:334.47px;font-size:21.60px;color:#237893;letter-spacing:-0.0012px;">31</span>
<span class="t  m" style="left:672.70px;top:366.87px;font-size:21.60px;color:#237893;letter-spacing:-0.0012px;">32</span>
<span class="t  m" style="left:672.70px;top:399.27px;font-size:21.60px;color:#237893;letter-spacing:-0.0012px;">33</span>
<span class="t  m" style="left:672.70px;top:431.67px;font-size:21.60px;color:#237893;letter-spacing:-0.0012px;">34</span>
<span class="t  m" style="left:672.70px;top:464.07px;font-size:21.60px;color:#237893;letter-spacing:-0.0012px;">35</span>
<span class="t  m" style="left:672.70px;top:496.47px;font-size:21.60px;color:#237893;letter-spacing:-0.0012px;">36</span>
<span class="t  m" style="left:672.70px;top:528.87px;font-size:21.60px;color:#237893;letter-spacing:-0.0012px;">37</span>
<span class="t  m" style="left:672.70px;top:561.27px;font-size:21.60px;color:#237893;letter-spacing:-0.0012px;">38</span>
<span class="t  m" style="left:672.70px;top:593.67px;font-size:21.60px;color:#237893;letter-spacing:-0.0012px;">39</span>
<span class="t  m" style="left:672.70px;top:626.07px;font-size:21.60px;color:#0b216f;letter-spacing:-0.0012px;">40</span>
<span class="t  m" style="left:672.70px;top:658.47px;font-size:21.60px;color:#237893;letter-spacing:-0.0012px;">41</span>
<span class="t  m" style="left:672.70px;top:690.87px;font-size:21.60px;color:#237893;letter-spacing:-0.0012px;">42</span>
<span class="t  m" style="left:772.01px;top:237.27px;font-size:21.60px;color:#319331;letter-spacing:-0.0012px;">}</span>
<span class="t  m" style="left:785.01px;top:237.27px;font-size:21.60px;color:#444444;letter-spacing:-0.0012px;">,</span>
<span class="t  m" style="left:772.01px;top:302.07px;font-size:21.60px;color:#444444;letter-spacing:-0.0012px;">return </span>
<span class="t  m" style="left:863.03px;top:302.07px;font-size:21.60px;color:#319331;letter-spacing:-0.0012px;">(</span>
<span class="t  m" style="left:798.01px;top:334.47px;font-size:21.60px;color:#444444;letter-spacing:-0.0012px;">&lt;</span>
<span class="t  m" style="left:811.01px;top:334.47px;font-size:21.60px;color:#38488a;letter-spacing:-0.0012px;">div</span>
<span class="t  m" style="left:850.02px;top:334.47px;font-size:21.60px;color:#444444;letter-spacing:-0.0012px;">&gt;</span>
<span class="t  m" style="left:824.02px;top:366.87px;font-size:21.60px;color:#444444;letter-spacing:-0.0012px;">&lt;</span>
<span class="t  m" style="left:837.02px;top:366.87px;font-size:21.60px;color:#38488a;letter-spacing:-0.0012px;">h1</span>
<span class="t  m" style="left:863.03px;top:366.87px;font-size:21.60px;color:#444444;letter-spacing:-0.0012px;">&gt;User Page&lt;/</span>
<span class="t  m" style="left:1019.06px;top:366.87px;font-size:21.60px;color:#38488a;letter-spacing:-0.0012px;">h1</span>
<span class="t  m" style="left:1045.07px;top:366.87px;font-size:21.60px;color:#444444;letter-spacing:-0.0012px;">&gt;</span>
<span class="t  m" style="left:824.02px;top:399.27px;font-size:21.60px;color:#444444;letter-spacing:-0.0012px;">&lt;</span>
<span class="t  m" style="left:837.02px;top:399.27px;font-size:21.60px;color:#38488a;letter-spacing:-0.0012px;">p</span>
<span class="t  m" style="left:850.02px;top:399.27px;font-size:21.60px;color:#444444;letter-spacing:-0.0012px;">&gt;User id: </span>
<span class="t  m" style="left:980.05px;top:399.27px;font-size:21.60px;color:#7b3814;letter-spacing:-0.0012px;">{</span>
<span class="t  m" style="left:993.06px;top:399.27px;font-size:21.60px;color:#088484;letter-spacing:-0.0012px;">session</span>
<span class="t  m" style="left:1084.08px;top:399.27px;font-size:21.60px;color:#444444;letter-spacing:-0.0012px;">.</span>
<span class="t  m" style="left:1097.08px;top:399.27px;font-size:21.60px;color:#088484;letter-spacing:-0.0012px;">userId</span>
<span class="t  m" style="left:1175.10px;top:399.27px;font-size:21.60px;color:#7b3814;letter-spacing:-0.0012px;">}</span>
<span class="t  m" style="left:1188.10px;top:399.27px;font-size:21.60px;color:#444444;letter-spacing:-0.0012px;">&lt;/</span>
<span class="t  m" style="left:1214.11px;top:399.27px;font-size:21.60px;color:#38488a;letter-spacing:-0.0012px;">p</span>
<span class="t  m" style="left:1227.11px;top:399.27px;font-size:21.60px;color:#444444;letter-spacing:-0.0012px;">&gt;</span>
<span class="t  m" style="left:824.02px;top:431.67px;font-size:21.60px;color:#444444;letter-spacing:-0.0012px;">&lt;</span>
<span class="t  m" style="left:837.02px;top:431.67px;font-size:21.60px;color:#38488a;letter-spacing:-0.0012px;">p</span>
<span class="t  m" style="left:850.02px;top:431.67px;font-size:21.60px;color:#444444;letter-spacing:-0.0012px;">&gt;User email: </span>
<span class="t  m" style="left:1019.06px;top:431.67px;font-size:21.60px;color:#7b3814;letter-spacing:-0.0012px;">{</span>
<span class="t  m" style="left:1032.07px;top:431.67px;font-size:21.60px;color:#088484;letter-spacing:-0.0012px;">session</span>
<span class="t  m" style="left:1123.09px;top:431.67px;font-size:21.60px;color:#444444;letter-spacing:-0.0012px;">.</span>
<span class="t  m" style="left:1136.09px;top:431.67px;font-size:21.60px;color:#088484;letter-spacing:-0.0012px;">email</span>
<span class="t  m" style="left:1201.11px;top:431.67px;font-size:21.60px;color:#7b3814;letter-spacing:-0.0012px;">}</span>
<span class="t  m" style="left:1214.11px;top:431.67px;font-size:21.60px;color:#444444;letter-spacing:-0.0012px;">&lt;/</span>
<span class="t  m" style="left:1240.11px;top:431.67px;font-size:21.60px;color:#38488a;letter-spacing:-0.0012px;">p</span>
<span class="t  m" style="left:1253.12px;top:431.67px;font-size:21.60px;color:#444444;letter-spacing:-0.0012px;">&gt;</span>
<span class="t  m" style="left:824.02px;top:464.07px;font-size:21.60px;color:#444444;letter-spacing:-0.0012px;">&lt;</span>
<span class="t  m" style="left:837.02px;top:464.07px;font-size:21.60px;color:#38488a;letter-spacing:-0.0012px;">button</span>
<span class="t  m" style="left:928.04px;top:464.07px;font-size:21.60px;color:#088484;letter-spacing:-0.0012px;">onClick=</span>
<span class="t  m" style="left:1032.07px;top:464.07px;font-size:21.60px;color:#7b3814;letter-spacing:-0.0012px;">{</span>
<span class="t  m" style="left:1045.07px;top:464.07px;font-size:21.60px;color:#088484;letter-spacing:-0.0012px;">onLogout</span>
<span class="t  m" style="left:1149.09px;top:464.07px;font-size:21.60px;color:#7b3814;letter-spacing:-0.0012px;">}</span>
<span class="t  m" style="left:1162.10px;top:464.07px;font-size:21.60px;color:#444444;letter-spacing:-0.0012px;">&gt;Logout&lt;/</span>
<span class="t  m" style="left:1279.12px;top:464.07px;font-size:21.60px;color:#38488a;letter-spacing:-0.0012px;">button</span>
<span class="t  m" style="left:1357.14px;top:464.07px;font-size:21.60px;color:#444444;letter-spacing:-0.0012px;">&gt;</span>
<span class="t  m" style="left:798.01px;top:496.47px;font-size:21.60px;color:#444444;letter-spacing:-0.0012px;">&lt;/</span>
<span class="t  m" style="left:824.02px;top:496.47px;font-size:21.60px;color:#38488a;letter-spacing:-0.0012px;">div</span>
<span class="t  m" style="left:863.03px;top:496.47px;font-size:21.60px;color:#444444;letter-spacing:-0.0012px;">&gt;</span>
<span class="t  m" style="left:772.01px;top:528.87px;font-size:21.60px;color:#319331;letter-spacing:-0.0012px;">)</span>
<span class="t  m" style="left:746.00px;top:561.27px;font-size:21.60px;color:#0431fa;letter-spacing:-0.0012px;">}</span>
<div class="r " style="left:1057.77px;top:621.60px;width:13.60px;height:31.80px;background:#d3ddd3;box-shadow:inset 0 0 0 1px #b9b9b9;"></div>
<div class="r " style="left:1330.84px;top:621.60px;width:13.60px;height:31.80px;background:#d3ddd3;box-shadow:inset 0 0 0 1px #b9b9b9;"></div>
<span class="t  m" style="left:746.00px;top:626.07px;font-size:21.60px;color:#088484;letter-spacing:-0.0012px;">UserPage</span>
<span class="t  m" style="left:850.02px;top:626.07px;font-size:21.60px;color:#444444;letter-spacing:-0.0012px;">.</span>
<span class="t  m" style="left:863.03px;top:626.07px;font-size:21.60px;color:#088484;letter-spacing:-0.0012px;">authenticate</span>
<span class="t  m" style="left:1032.07px;top:626.07px;font-size:21.60px;color:#444444;letter-spacing:-0.0012px;">= </span>
<span class="t  m" style="left:1058.07px;top:626.07px;font-size:21.60px;color:#0431fa;letter-spacing:-0.0012px;">{</span>
<span class="t  m" style="left:1071.08px;top:626.07px;font-size:21.60px;color:#444444;letter-spacing:-0.0012px;">redirectTo: </span>
<span class="t  m" style="left:1227.11px;top:626.07px;font-size:21.60px;color:#8f5656;letter-spacing:-0.0012px;">&quot;/login&quot;</span>
<span class="t  m" style="left:1331.13px;top:626.07px;font-size:21.60px;color:#0431fa;letter-spacing:-0.0012px;">}</span>
<span class="t  m" style="left:746.00px;top:690.87px;font-size:21.60px;color:#444444;letter-spacing:-0.0012px;">export default </span>
<span class="t  m" style="left:941.05px;top:690.87px;font-size:21.60px;color:#088484;letter-spacing:-0.0012px;">UserPage</span>
<div class="r " style="left:627.00px;top:209.70px;width:1377.00px;height:38.90px;background:#ffffff;box-shadow:0 3px 5px -1px rgba(0,0,0,0.13);"></div>
<span class="t " style="left:656.50px;top:218.44px;font-size:23.40px;color:#7b7b7b;letter-spacing:0.966px;">next-blitz-auth</span>
<svg class="r" style="left:826.70px;top:220.30px;" width="12.60" height="20.00" viewBox="-2 -2 12.6 20" fill="none"><path d="M0 0 L8.6 8.0 L0 16" stroke="#6a6a6a" stroke-width="1.7" stroke-linejoin="miter"/></svg>
<span class="t " style="left:847.00px;top:218.44px;font-size:23.40px;color:#7b7b7b;letter-spacing:0.311px;">pages</span>
<svg class="r" style="left:921.70px;top:220.30px;" width="12.60" height="20.00" viewBox="-2 -2 12.6 20" fill="none"><path d="M0 0 L8.6 8.0 L0 16" stroke="#6a6a6a" stroke-width="1.7" stroke-linejoin="miter"/></svg>
<span class="t " style="left:949.00px;top:218.92px;font-size:19.00px;color:#2f8fb3;font-weight:700;letter-spacing:-0.9px;-webkit-text-stroke:0;">TS</span>
<span class="t " style="left:982.00px;top:218.44px;font-size:23.40px;color:#7b7b7b;letter-spacing:0.445px;">user.tsx</span>
<svg class="r" style="left:1074.70px;top:220.30px;" width="12.60" height="20.00" viewBox="-2 -2 12.6 20" fill="none"><path d="M0 0 L8.6 8.0 L0 16" stroke="#6a6a6a" stroke-width="1.7" stroke-linejoin="miter"/></svg>
<span class="t " style="left:1096.50px;top:218.44px;font-size:23.40px;color:#7b7b7b;">…</span>
<div class="r " style="left:1979.30px;top:249.00px;width:1.20px;height:950.00px;background:#e6e6e6;"></div>
<div class="r " style="left:1980.20px;top:622.00px;width:24.30px;height:394.00px;background:#c1c1c1;"></div>
<div class="r " style="left:1980.20px;top:622.00px;width:24.30px;height:31.60px;background:#b5b5b5;"></div>
<div class="r " style="left:1980.20px;top:774.30px;width:24.30px;height:2.60px;background:#999999;"></div>
<div class="r " style="left:1988.20px;top:776.50px;width:8.20px;height:12.60px;background:#909090;"></div>
<svg class="r" style="left:139.20px;top:1204.00px;" width="26.00" height="30.00" viewBox="0 0 26 30" fill="none"><circle cx="6.6" cy="6" r="2.8" stroke="#ffffff" stroke-width="1.7"/><circle cx="6.6" cy="23" r="2.8" stroke="#ffffff" stroke-width="1.7"/><circle cx="17.8" cy="11" r="2.8" stroke="#ffffff" stroke-width="1.7"/><path d="M6.6 8.8 V20.2 M17.8 13.8 C17.8 18.6 6.6 15.6 6.6 20.2" stroke="#ffffff" stroke-width="1.7"/></svg>
<span class="t " style="left:170.50px;top:1208.42px;font-size:21.60px;color:#ffffff;letter-spacing:0.394px;">main*</span>
<svg class="r" style="left:257.30px;top:1205.40px;" width="26.00" height="26.00" viewBox="-13 -13 26 26" fill="none"><path d="M-9.2 1.4 A9.3 9.3 0 0 1 9.2 -0.6" stroke="#ffffff" stroke-width="1.7"/><path d="M9.2 1.8 A9.3 9.3 0 0 1 -9.0 2.4" stroke="#ffffff" stroke-width="1.7" transform="rotate(-4)"/><path d="M5.6 -3.2 L9.3 0.6 L12.6 -3.2" stroke="#ffffff" stroke-width="1.7"/><path d="M-5.6 3.4 L-9.3 -0.4 L-12.6 3.4" stroke="#ffffff" stroke-width="1.7"/></svg>
<span class="t " style="left:289.60px;top:1208.42px;font-size:21.60px;color:#ffffff;letter-spacing:-0.413px;">0</span>
<svg class="r" style="left:304.20px;top:1208.60px;" width="13.60" height="19.00" viewBox="0 0 13.6 19" fill="none"><path d="M6.8 1.5 V16.5 M1.2 10.8 L6.8 16.8 L12.4 10.8" stroke="#ffffff" stroke-width="1.8"/></svg>
<span class="t " style="left:326.50px;top:1208.42px;font-size:21.60px;color:#ffffff;letter-spacing:0.187px;">8</span>
<svg class="r" style="left:341.60px;top:1208.60px;" width="13.60" height="19.00" viewBox="0 0 13.6 19" fill="none"><path d="M6.8 17.5 V2.5 M1.2 8.2 L6.8 2.2 L12.4 8.2" stroke="#ffffff" stroke-width="1.8"/></svg>
<svg class="r" style="left:385.60px;top:1207.60px;" width="24.00" height="24.00" viewBox="-12 -12 24 24" fill="none"><circle r="10" stroke="#ffffff" stroke-width="1.6"/><path d="M-4.3 -4.3 L4.3 4.3 M4.3 -4.3 L-4.3 4.3" stroke="#ffffff" stroke-width="1.6"/></svg>
<span class="t " style="left:417.00px;top:1208.42px;font-size:21.60px;color:#ffffff;letter-spacing:-0.413px;">0</span>
<svg class="r" style="left:436.40px;top:1207.80px;" width="25.00" height="23.00" viewBox="0 0 25 23" fill="none"><path d="M12.5 2 L23.4 21 H1.6 Z" stroke="#ffffff" stroke-width="1.6" stroke-linejoin="round"/><path d="M12.5 8.4 V15" stroke="#ffffff" stroke-width="1.7"/><circle cx="12.5" cy="17.9" r="1.1" fill="#ffffff"/></svg>
<span class="t " style="left:468.80px;top:1208.42px;font-size:21.60px;color:#ffffff;letter-spacing:-1.213px;">0</span>
<svg class="r" style="left:509.50px;top:1205.50px;" width="26.00" height="28.00" viewBox="0 0 26 28" fill="none"><path d="M1.8 14.6 C3.4 9 8.2 7.2 14.2 7.2 V2.6 L23.6 9.8 L14.2 17 V12.4 C10 12.2 7.4 13 5 15.6" stroke="#ffffff" stroke-width="1.7" stroke-linejoin="round"/><circle cx="10.2" cy="21.4" r="3.6" stroke="#ffffff" stroke-width="1.7"/></svg>
<span class="t " style="left:542.00px;top:1208.42px;font-size:21.60px;color:#ffffff;letter-spacing:0.115px;">Live Share</span>
<svg class="r" style="left:949.00px;top:1205.50px;" width="18.00" height="28.00" viewBox="0 0 18 28" fill="none"><circle cx="9" cy="13.6" r="5" stroke="#ffffff" stroke-width="1.8"/><path d="M9 2.6 V8.4 M9 18.8 V25" stroke="#ffffff" stroke-width="1.8"/></svg>
<span class="t " style="left:977.50px;top:1208.42px;font-size:21.60px;color:#ffffff;letter-spacing:0.348px;">You, 7 days ago</span>
<span class="t " style="left:1166.50px;top:1208.42px;font-size:21.60px;color:#ffffff;letter-spacing:0.542px;">Ln 40, Col 47</span>
<span class="t " style="left:1331.50px;top:1208.42px;font-size:21.60px;color:#ffffff;letter-spacing:0.367px;">Spaces: 2</span>
<span class="t " style="left:1460.50px;top:1208.42px;font-size:21.60px;color:#ffffff;letter-spacing:0.952px;">UTF-8</span>
<span class="t " style="left:1555.50px;top:1208.42px;font-size:21.60px;color:#ffffff;letter-spacing:-1.707px;">LF</span>
<span class="t " style="left:1608.50px;top:1208.42px;font-size:21.60px;color:#ffffff;letter-spacing:4.572px;">{}</span>
<span class="t " style="left:1642.00px;top:1208.42px;font-size:21.60px;color:#ffffff;letter-spacing:0.535px;">TypeScript React</span>
<svg class="r" style="left:1840.00px;top:1200.00px;" width="140.00" height="38.00" viewBox="1840 1200 140 38" fill="none"><path d="M1844.2 1222.6 C1844.2 1220.2 1846 1218.8 1848.4 1218.2 H1865.4 C1867.8 1217.8 1869.6 1219.6 1869.6 1222.6 C1869.6 1227.4 1863.4 1231 1856.9 1231 C1850.4 1231 1844.2 1227.4 1844.2 1222.6 Z" fill="#ffffff"/><rect x="1848.3" y="1210.4" width="8.3" height="8.6" rx="3.6" stroke="#ffffff" stroke-width="2.0" fill="#007acc"/><rect x="1857.2" y="1210.4" width="8.3" height="8.6" rx="3.6" stroke="#ffffff" stroke-width="2.0" fill="#007acc"/><rect x="1852.9" y="1221.8" width="2.1" height="4.6" rx="0.9" fill="#007acc"/><rect x="1858.8" y="1221.8" width="2.1" height="4.6" rx="0.9" fill="#007acc"/><g stroke="#ffffff" stroke-width="1.6" fill="none" stroke-linejoin="miter"><path d="M1905.6 1210.6 V1207.9 H1921.4 V1217.6 H1917.4 L1914.8 1220.4 V1217.6 H1913.6"/><circle cx="1907.1" cy="1217.6" r="3.5"/><path d="M1900.4 1229.6 C1900.8 1224.6 1903.6 1222.6 1907.1 1222.6 C1910.6 1222.6 1913.4 1224.6 1913.8 1229.6"/></g><g stroke="#ffffff" stroke-width="1.6" fill="none" stroke-linejoin="round"><path d="M1965.6 1208.6 C1961 1208.8 1958.6 1212.4 1958.6 1216.4 V1220.6 L1956.2 1225.2 H1973.6 L1972.4 1221.6 V1219.4"/><path d="M1962.6 1226 C1962.8 1228.6 1966.8 1228.6 1967 1226"/></g><circle cx="1971.2" cy="1212.6" r="4.6" fill="#ffffff"/></svg>
<svg class="r" style="left:112.00px;top:146.00px;" width="86.00" height="1053.00" viewBox="112 146 86 1053" fill="none"><rect x="112" y="146.2" width="3.4" height="86.4" fill="#ffffff"/><g stroke="#ffffff" stroke-width="2.7" stroke-linejoin="round" fill="none"><path d="M147.5 172.2 V197 Q147.5 199.2 149.7 199.2 H168.9 Q171.1 199.2 171.1 197 V178.6 L162.6 170 H149.7 Q147.5 170 147.5 172.2 Z"/><path d="M162.2 170.4 V179 H170.8"/><path d="M147 180.5 H139.1 Q136.9 180.5 136.9 182.7 V207.5 Q136.9 209.7 139.1 209.7 H157.6 Q159.8 209.7 159.8 207.5 V199.8"/></g><g stroke="#858585" stroke-width="2.7" fill="none"><circle cx="160.8" cy="269.8" r="13.2"/><path d="M151.4 279.4 L135.8 296.4"/></g><g stroke="#858585" stroke-width="2.7" fill="none"><circle cx="145.2" cy="347.7" r="5.3"/><circle cx="145.2" cy="377.5" r="5.3"/><circle cx="164.7" cy="354.9" r="5.3"/><path d="M145.2 353 V372.2 M164.7 360.2 C164.7 368 147 362 145.4 371"/></g><circle cx="169.1" cy="377.5" r="14.4" fill="#007acc"/><g stroke="#858585" stroke-width="2.7" fill="none" stroke-linejoin="miter"><path d="M148.4 447.6 V429.4 L174.4 446.2 L158 456.8"/><ellipse cx="144" cy="460.6" rx="6.9" ry="9.2"/><path d="M137.2 458.2 H150.8 M133.6 452.6 L138.4 456.2 M154.4 452.6 L149.6 456.2 M133 461.6 H137.2 M150.8 461.6 H155 M133.6 470.6 L138.6 466.4 M154.4 470.6 L149.4 466.4" stroke-width="2.3"/></g><g stroke="#858585" stroke-width="2.7" fill="none" stroke-linejoin="round"><path d="M136.4 523.6 H148.4 Q150.4 523.6 150.4 525.6 V540.2 H164.4 Q166.4 540.2 166.4 542.2 V553.6 Q166.4 555.6 164.4 555.6 H136.4 Q134.4 555.6 134.4 553.6 V525.6 Q134.4 523.6 136.4 523.6 Z M134.4 540.2 H150.4 V555.6"/><rect x="159.2" y="515.4" width="15.5" height="15.8" rx="2.6"/></g><g stroke="#858585" stroke-width="2.7" fill="none"><circle cx="154.4" cy="622.8" r="20.2"/><path d="M151.2 612 V632.6 M151.2 612 L162.2 623"/></g><g fill="#858585"><circle cx="151.2" cy="611.8" r="3.9"/><circle cx="162.3" cy="623.2" r="3.9"/><circle cx="150.9" cy="632.8" r="3.9"/></g><g stroke="#858585" stroke-width="2.7" fill="none" stroke-linejoin="miter"><path d="M134.5 715.6 C137.4 702.4 146.4 696.6 158.6 696.3 V690.2 L174.2 701.1 L158.6 712 V705.9 C149.6 706 143 709.4 137.6 716.6 Z"/><circle cx="150.6" cy="722.3" r="7"/></g><circle cx="154.6" cy="795.4" r="20.2" stroke="#858585" stroke-width="2.7" fill="none"/><path fill="#858585" transform="translate(0 1.7)" d="M150.2 813.3 V807.6 C146.6 808.6 144.6 806.8 143.6 804.6 C142.8 802.8 141.6 802.2 141 801.6 C142.6 800.8 144.4 801.8 145.6 803.6 C146.8 805.4 148.6 805.4 150.4 804.8 C150.6 803.6 151 802.8 151.6 802.2 C146.4 801.6 142.4 799.4 142.4 792.8 C142.4 790.8 143 789.2 144.2 787.8 C143.8 786.6 143.6 784.6 144.4 782.6 C146.2 782.6 148 783.6 149.4 784.6 C152.6 783.8 156.6 783.8 159.8 784.6 C161.2 783.6 163 782.6 164.8 782.6 C165.6 784.6 165.4 786.6 165 787.8 C166.2 789.2 166.8 790.8 166.8 792.8 C166.8 799.4 162.8 801.6 157.6 802.2 C158.6 803.2 159 804.6 159 806.6 V813.3 Z"/><g stroke="#858585" stroke-width="2.7" fill="none"><circle cx="154.75" cy="1068.75" r="20.2"/><circle cx="154.7" cy="1065" r="8.7"/><path d="M141.7 1083.6 C144 1077.4 148.6 1074.7 154.75 1074.7 C160.9 1074.7 165.5 1077.4 167.8 1083.6"/></g><g stroke="#858585" stroke-width="2.7" fill="none" stroke-linejoin="round"><path d="M168.7 1151.4 L174.7 1151.7 L174.7 1158.3 L168.7 1158.6 L167.2 1162.3 L171.2 1166.8 L166.5 1171.4 L162.0 1167.4 L158.4 1168.9 L158.1 1174.9 L151.4 1174.9 L151.1 1168.9 L147.5 1167.4 L143.0 1171.4 L138.3 1166.8 L142.3 1162.3 L140.8 1158.6 L134.8 1158.3 L134.8 1151.7 L140.8 1151.4 L142.3 1147.7 L138.3 1143.2 L143.0 1138.6 L147.5 1142.6 L151.1 1141.1 L151.4 1135.1 L158.1 1135.1 L158.4 1141.1 L162.0 1142.6 L166.5 1138.6 L171.2 1143.2 L167.2 1147.7 Z"/><circle cx="154.75" cy="1155" r="4.7"/></g><circle cx="169.1" cy="1170.4" r="14.4" fill="#007acc"/></svg>
<span class="t " style="left:165.00px;top:370.83px;font-size:15.80px;color:#ffffff;-webkit-text-stroke:0.55px #fff;">1</span>
<span class="t " style="left:165.00px;top:1163.83px;font-size:15.80px;color:#ffffff;-webkit-text-stroke:0.55px #fff;">1</span>
</div>
</body></html>
